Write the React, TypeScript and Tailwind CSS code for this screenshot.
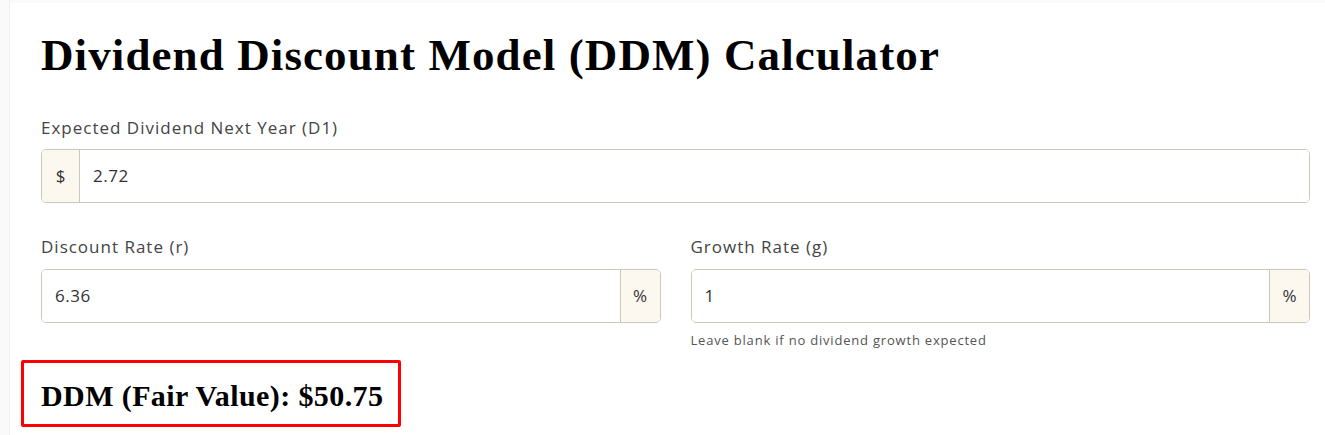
import { useState } from "react";

function PrefixInput(props: {prefix: string, value: string}){
  const [value, setValue] = useState(props.value);
  return(
    <div className="flex h-[54px] w-full rounded-[5px] border border-[#cdc9ba] overflow-hidden">
      <div className="w-[38px] flex items-center justify-center bg-[#fcf8f0] border-r border-[#cdc9ba] text-[17px] text-[#333]">{props.prefix}</div>
      <input
      className="flex-1 px-[13px] text-[17px] tracking-[0.5px] text-[#333] outline-none bg-white"
      value={value}
      onChange={(e) => setValue(e.target.value)}
      />
    </div>
  )
}

function SuffixInput(props: {suffix: string, value: string}){
  const [value, setValue] = useState(props.value);
  return(
    <div className="flex h-[54px] w-full rounded-[5px] border border-[#cdc9ba] overflow-hidden">
      <input
      className="flex-1 min-w-0 px-[13px] text-[17px] tracking-[0.5px] text-[#333] outline-none bg-white"
      value={value}
      onChange={(e) => setValue(e.target.value)}
      />
      <div className="w-[40px] flex items-center justify-center bg-[#fcf8f0] border-l border-[#cdc9ba] text-[17px] text-[#333]">{props.suffix}</div>
    </div>
  )
}

export default function App(){
  return(
    <div className="w-[1325px] h-[435px] flex bg-[#fafafa] overflow-hidden font-['Open_Sans',sans-serif]">
      <div className="w-[10px] shrink-0 border-r border-[#f0f0f0]"/>
      <div className="flex-1 bg-white mt-[3px] pl-[31px] pr-[15px] flex flex-col">
        <h1 className="mt-[26px] text-[45px] leading-[52px] font-bold text-black font-['Liberation_Serif',serif] tracking-[1.1px]">
          Dividend Discount Model (DDM) Calculator
        </h1>

        <div className="mt-[37px] text-[17px] tracking-[1px] text-[#444] leading-[20px]">Expected Dividend Next Year (D1)</div>
        <div className="mt-[11px]">
          <PrefixInput prefix="$" value="2.72"/>
        </div>

        <div className="mt-[34px] grid grid-cols-2 gap-[30px]">
          <div className="flex flex-col">
            <div className="text-[17px] tracking-[1px] text-[#444] leading-[20px]">Discount Rate (r)</div>
            <div className="mt-[12px]">
              <SuffixInput suffix="%" value="6.36"/>
            </div>
          </div>
          <div className="flex flex-col">
            <div className="text-[17px] tracking-[1px] text-[#444] leading-[20px]">Growth Rate (g)</div>
            <div className="mt-[12px]">
              <SuffixInput suffix="%" value="1"/>
            </div>
            <div className="mt-[9px] text-[13px] tracking-[0.8px] leading-[16px] text-[#555]">Leave blank if no dividend growth expected</div>
          </div>
        </div>

        <div className="mt-[12px] -ml-[20px] w-[380px] h-[67px] border-[3px] border-[#ff0000] rounded-[2px] flex items-center pl-[17px]">
          <div className="text-[30px] tracking-[0.4px] leading-[34px] font-bold text-black font-['Liberation_Serif',serif] mt-[4px]">DDM (Fair Value): $50.75</div>
        </div>
      </div>
    </div>
  )
}
